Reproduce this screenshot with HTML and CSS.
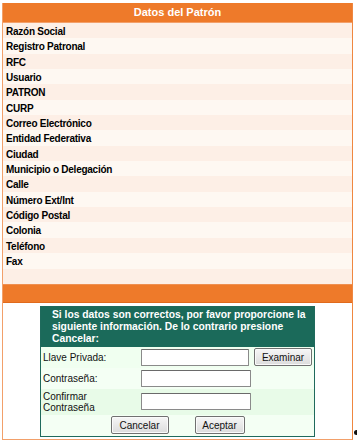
FILE: index.html
```html
<!DOCTYPE html>
<html lang="es">
<head>
<meta charset="utf-8">
<title>Datos del Patrón</title>
<link rel="stylesheet" href="styles.css">
</head>
<body>
<div class="panel">
  <div class="panel-head">Datos del Patrón</div>
  <div class="rows">
    <div class="row">Razón Social</div>
    <div class="row">Registro Patronal</div>
    <div class="row">RFC</div>
    <div class="row">Usuario</div>
    <div class="row">PATRON</div>
    <div class="row">CURP</div>
    <div class="row">Correo Electrónico</div>
    <div class="row">Entidad Federativa</div>
    <div class="row">Ciudad</div>
    <div class="row">Municipio o Delegación</div>
    <div class="row">Calle</div>
    <div class="row">Número Ext/Int</div>
    <div class="row">Código Postal</div>
    <div class="row">Colonia</div>
    <div class="row">Teléfono</div>
    <div class="row">Fax</div>
    <div class="row"></div>
  </div>
  <div class="panel-bar"></div>
  <div class="panel-foot">
    <div class="signbox">
      <div class="sign-head">Si los datos son correctos, por favor proporcione la siguiente información. De lo contrario presione Cancelar:</div>
      <div class="frow">
        <div class="flabel">Llave Privada:</div>
        <div class="fcontrol"><span class="input in-short"></span><span class="btn btn-exam">Examinar</span></div>
      </div>
      <div class="frow alt">
        <div class="flabel">Contraseña:</div>
        <div class="fcontrol"><span class="input"></span></div>
      </div>
      <div class="frow tall">
        <div class="flabel">Confirmar<br>Contraseña</div>
        <div class="fcontrol"><span class="input"></span></div>
      </div>
      <div class="frow alt actions">
        <span class="btn btn-cancel">Cancelar</span>
        <span class="btn btn-ok">Aceptar</span>
      </div>
    </div>
  </div>
</div>
<span class="edge-mark"></span>
</body>
</html>
```
FILE: styles.css
```css
html, body {
  margin: 0;
  padding: 0;
  background: #ffffff;
}
body {
  font-family: Tahoma, "Liberation Sans", Arial, sans-serif;
  font-size: 10px;
  color: #000;
  position: relative;
  width: 357px;
  height: 447px;
  overflow: hidden;
}
.panel {
  margin: 3px 0 0 2px;
  width: 349px;
  border: 1px solid #f2a06a;
  border-top: 0;
  border-right-color: #ef8740;
}
.panel-head {
  height: 19px;
  line-height: 19px;
  background: #ee7a2a;
  color: #fff;
  font-weight: bold;
  font-size: 11px;
  text-align: center;
  border-bottom: 1px solid #f3a06a;
}
.rows {
  display: flex;
  flex-direction: column;
}
.row {
  height: 15.35px;
  line-height: 17px;
  padding-left: 3px;
  font-weight: bold;
  background: #fdefe6;
  white-space: nowrap;
  letter-spacing: -0.25px;
}
.row:nth-child(even) {
  background: #fef8f2;
}
.panel-bar {
  height: 17px;
  background: #ee7a2a;
  border-top: 1px solid #ef8f50;
  border-bottom: 1px solid #e06a1c;
}
.panel-foot {
  padding: 3px 0 2px 37px;
  background: #fff;
}
.signbox {
  width: 273px;
  border: 1px solid #1f6a5c;
  background: #f0fff0;
}
.sign-head {
  background: #1b6a5a;
  color: #fff;
  font-weight: bold;
  font-size: 10.3px;
  padding: 2px 1px 3px 11px;
  line-height: 12px;
  height: 35px;
}
.frow {
  display: flex;
  align-items: center;
  height: 21px;
  background: #f0fff0;
}
.frow.alt {
  background: #f4fff4;
}
.frow.tall {
  height: 26px;
  background: #e8fbe8;
}
.flabel {
  width: 98px;
  padding-left: 2px;
  line-height: 11px;
  color: #111;
}
.fcontrol {
  display: flex;
  align-items: center;
  gap: 5px;
}
.input {
  display: block;
  width: 108px;
  height: 15px;
  border: 1px solid #8a8a8a;
  border-top-color: #6a6a6a;
  background: #fff;
  border-radius: 1px;
}
.input.in-short {
  width: 106px;
}
.btn {
  display: flex;
  align-items: center;
  justify-content: center;
  height: 16px;
  border: 1px solid #707070;
  border-radius: 2px;
  background: linear-gradient(#f6f6f6, #dcdcdc);
  color: #111;
  font-size: 10px;
  box-shadow: inset 0 0 0 1px #fafafa;
}
.btn-exam {
  width: 56px;
}
.actions {
  justify-content: center;
  gap: 26px;
  height: 21px;
}
.btn-cancel {
  width: 56px;
}
.btn-ok {
  width: 48px;
}
.edge-mark {
  position: absolute;
  right: -2px;
  top: 430px;
  width: 5px;
  height: 5px;
  border-radius: 50%;
  background: #111;
}
```
